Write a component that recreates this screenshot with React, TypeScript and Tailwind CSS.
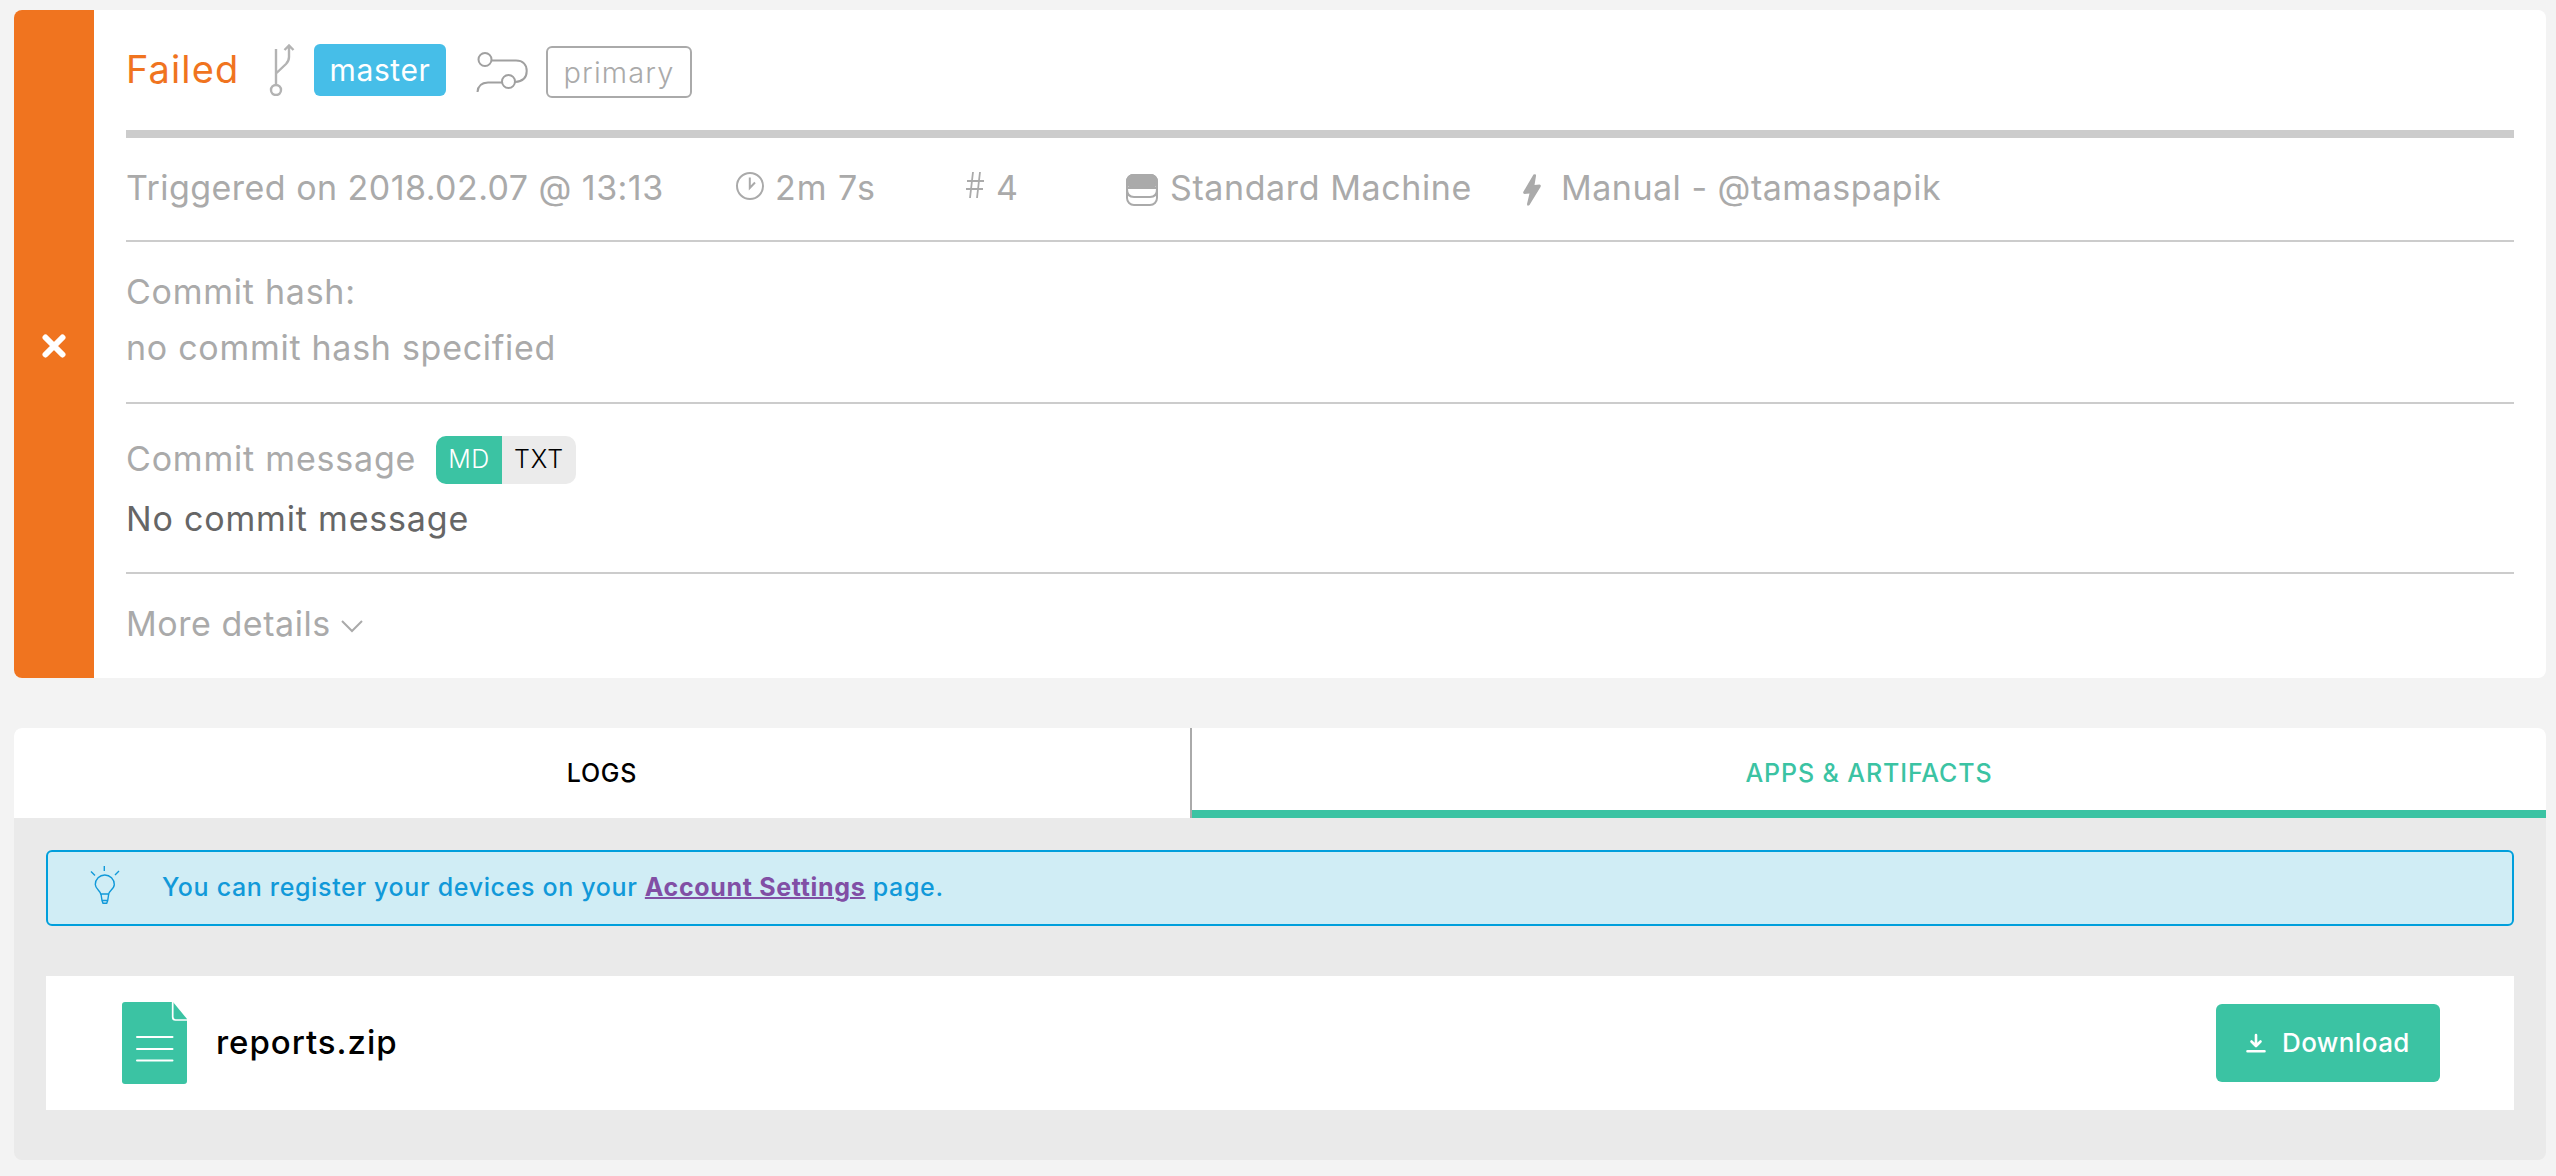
import React from "react";

function T({ c, children }: { c: string; children: React.ReactNode }) {
  return <span className={`whitespace-pre leading-none ${c}`}>{children}</span>;
}

const BranchIcon = () => (
  <svg width="28" height="52" viewBox="0 0 28 52" fill="none" stroke="#b3b3b3" strokeWidth="2.4" className="shrink-0">
    <path d="M7 5V40M7 29.500L17 20Q20 17 20 13V1.500M15.500 6L20 1.500L24.500 6" />
    <circle cx="7" cy="46" r="5" />
  </svg>
);

const WorkflowIcon = () => (
  <svg width="54" height="44" viewBox="0 0 54 44" fill="none" stroke="#a0a0a0" strokeWidth="2" className="ml-[30px] mt-[4px] shrink-0">
    <circle cx="9" cy="9.500" r="6.500" />
    <circle cx="32.500" cy="31.500" r="6.500" />
    <path d="M15.500 10.500H40C47 10.500 50.700 15 50.700 21C50.700 27 47 31.500 39 32M26 32.500H12Q2 33 1.500 42" />
  </svg>
);

export default function App() {
  return (
    <div className="h-[1176px] w-[2556px] bg-[#f3f3f3] pl-[14px] pt-[10px] text-[34px] text-[#aaaaaa]" style={{ fontFamily: 'Inter, "Liberation Sans", sans-serif' }}>
      <section className="flex h-[668px] w-[2532px] overflow-hidden rounded-[8px] bg-white">
        <div className="flex w-[80px] shrink-0 items-center justify-center bg-[#f0741f]">
          <svg width="24" height="24" viewBox="0 0 24 24" stroke="#fff" strokeWidth="6" strokeLinecap="round" className="mt-[3px]">
            <path d="M3.500 3.500L20.500 20.500M20.500 3.500L3.500 20.500" />
          </svg>
        </div>
        <div className="ml-[32px] w-[2388px]">
          <div className="flex h-[120px] items-center">
            <div className="flex w-[143px] pb-[2px]"><T c="text-[38px] tracking-[1.1px] text-[#f0741f]">Failed</T></div>
            <BranchIcon />
            <div className="ml-[17px] flex h-[52px] w-[132px] items-center justify-center rounded-[6px] bg-[#46bee8] text-white">
              <T c="text-[30px] tracking-[0.6px]">master</T>
            </div>
            <WorkflowIcon />
            <div className="ml-[16px] mt-[4px] flex h-[52px] w-[146px] items-center justify-center rounded-[6px] border-2 border-[#aaaaaa]">
              <T c="text-[29px] font-light tracking-[1.1px]">primary</T>
            </div>
          </div>
          <div className="h-[8px] bg-[#cccccc]" />
          <div className="flex h-[104px] items-center border-b-2 border-[#cccccc]">
            <div className="flex w-[609px] pb-[2px]"><T c="tracking-[0.46px]">Triggered on 2018.02.07 @ 13:13</T></div>
            <div className="flex w-[231px] items-center">
              <svg width="30" height="30" viewBox="0 0 30 30" fill="none" stroke="#aaaaaa" strokeWidth="2" className="-mt-[6px]"><circle cx="15" cy="15" r="13" /><path d="M14.800 6.500V17L20 11.500" /></svg>
              <T c="ml-[10px] mb-[2px] tracking-[1px]">2m 7s</T>
            </div>
            <div className="flex w-[160px] items-center">
              <svg width="18" height="26" viewBox="0 0 18 26" stroke="#aaaaaa" strokeWidth="1.800" className="-mt-[8px]"><path d="M7 0L4 26M14 0L11 26M1 9H18M0 17H17" /></svg>
              <T c="ml-[12px] mb-[2px]">4</T>
            </div>
            <div className="flex w-[397px] items-center">
              <svg width="32" height="32" viewBox="0 0 32 32" fill="none" stroke="#aaaaaa" strokeWidth="2" className="mt-[2px]"><rect x="1" y="1" width="30" height="30" rx="7" /><path d="M1 14V8Q1 1 8 1H24Q31 1 31 8V14Q29 14 24 14H8Q3 14 1 14ZM1 15Q1 23 8 23H24Q31 23 31 15" /><path d="M2 8Q2 1 8 1H24Q30 1 30 8Q30 14 24 14H8Q2 14 2 8Z" fill="#aaaaaa" /></svg>
              <T c="ml-[12px] mb-[2px] tracking-[0.6px]">Standard Machine</T>
            </div>
            <svg width="18" height="32" viewBox="0 0 18 32" fill="#aaaaaa" className="mt-[2px]"><path d="M10.500 0.500Q13.500 -0.500 13 2L11.500 11L16.500 10.500Q18.500 11 17.500 13L6.500 31Q4 33 4 30L6.500 19.500L1.500 20Q-0.500 19.500 0.500 17.500Z" /></svg>
            <T c="ml-[20px] mb-[2px] tracking-[0.5px]">Manual - @tamaspapik</T>
          </div>
          <div className="flex h-[162px] flex-col gap-[22px] border-b-2 border-[#cccccc] pt-[33px]">
            <T c="tracking-[0.75px]">Commit hash:</T>
            <T c="tracking-[0.72px]">no commit hash specified</T>
          </div>
          <div className="h-[170px] border-b-2 border-[#cccccc] pt-[32px]">
            <div className="flex h-[48px] items-center">
              <div className="flex w-[310px] pb-[2px]"><T c="tracking-[0.8px]">Commit message</T></div>
              <div className="flex h-[48px] overflow-hidden rounded-[10px] text-[25px] font-light">
                <div className="flex w-[66px] items-center justify-center bg-[#3bc3a3] pb-[2px] text-white"><T c="tracking-[0.6px]">MD</T></div>
                <div className="flex w-[74px] items-center justify-center bg-[#ebebeb] pb-[2px] text-black"><T c="tracking-[0.9px]">TXT</T></div>
              </div>
            </div>
            <div className="mt-[18px] flex"><T c="tracking-[0.82px] text-[#666666]">No commit message</T></div>
          </div>
          <div className="flex h-[100px] items-center">
            <div className="flex w-[215px]"><T c="tracking-[0.55px]">More details</T></div>
            <svg width="22" height="14" viewBox="0 0 22 14" fill="none" stroke="#aaaaaa" strokeWidth="2" className="mt-[4px]"><path d="M1 2L11 12L21 2" /></svg>
          </div>
        </div>
      </section>

      <section className="mt-[50px] h-[432px] w-[2532px] overflow-hidden rounded-[8px] bg-[#eaeaea]">
        <div className="flex h-[90px] bg-white text-[25px] font-medium">
          <div className="flex w-[1178px] items-center justify-center border-r-2 border-[#aaaaaa] text-black"><T c="tracking-[0.8px]">LOGS</T></div>
          <div className="flex flex-1 items-center justify-center border-b-[8px] border-[#3bc3a3] pt-[8px] text-[#3bc3a3]"><T c="tracking-[0.9px]">APPS &amp; ARTIFACTS</T></div>
        </div>
        <div className="mx-[32px] mt-[32px] flex h-[76px] items-center rounded-[6px] border-2 border-[#009fdc] bg-[#d0edf5] text-[25px] font-medium text-[#1199d9]">
          <svg width="30" height="40" viewBox="0 0 30 40" fill="none" stroke="#1199d9" strokeWidth="1.400" className="-mt-[4px] ml-[42px]"><path d="M14.300 0V5M1 5.500L5 9.500M29 5L25 9M10.700 28C10.700 25 5.300 23 5.300 18.500A9.500 9.500 0 0 1 24.300 18.500C24.300 23 18.700 25 18.700 28ZM11 28L12 34.500H17.700L18.700 28M12 34.500L13 37.200H16.700L17.700 34.500" /></svg>
          <T c="ml-[42px] mb-[2px] tracking-[0.65px]">You can register your devices on your </T>
          <T c="mb-[2px] font-bold tracking-[0.67px] text-[#814fa5] underline decoration-2">Account Settings</T>
          <T c="mb-[2px] tracking-[0.65px]"> page.</T>
        </div>
        <div className="mx-[32px] mt-[50px] flex h-[134px] items-center bg-white pl-[76px] pr-[74px]">
          <svg width="65" height="82" viewBox="0 0 65 82" fill="none"><path d="M3 0H51L65 17V79Q65 82 62 82H3Q0 82 0 79V3Q0 0 3 0Z" fill="#3bc3a3" /><path d="M50.700 0V15Q50.700 18 53.500 18H65" stroke="#fff" strokeWidth="1.700" /><path d="M15 35H50.500M15 47H50.500M15 58.500H50.500" stroke="#fff" strokeWidth="2" strokeLinecap="round" /></svg>
          <T c="mb-[2px] ml-[29px] text-[33px] font-medium tracking-[0.95px] text-black">reports.zip</T>
          <div className="ml-auto flex h-[78px] w-[224px] items-center rounded-[6px] bg-[#3bc3a3] pl-[30px] text-white">
            <svg width="20" height="20" viewBox="0 0 20 20" fill="none" stroke="#fff" strokeWidth="2.600" strokeLinecap="round" strokeLinejoin="round"><path d="M10 2V12.500M5.500 8.500L10 13L14.500 8.500M1.500 18.300H18.500" /></svg>
            <T c="ml-[16px] text-[26px] font-medium tracking-[0.4px]">Download</T>
          </div>
        </div>
      </section>
    </div>
  );
}
